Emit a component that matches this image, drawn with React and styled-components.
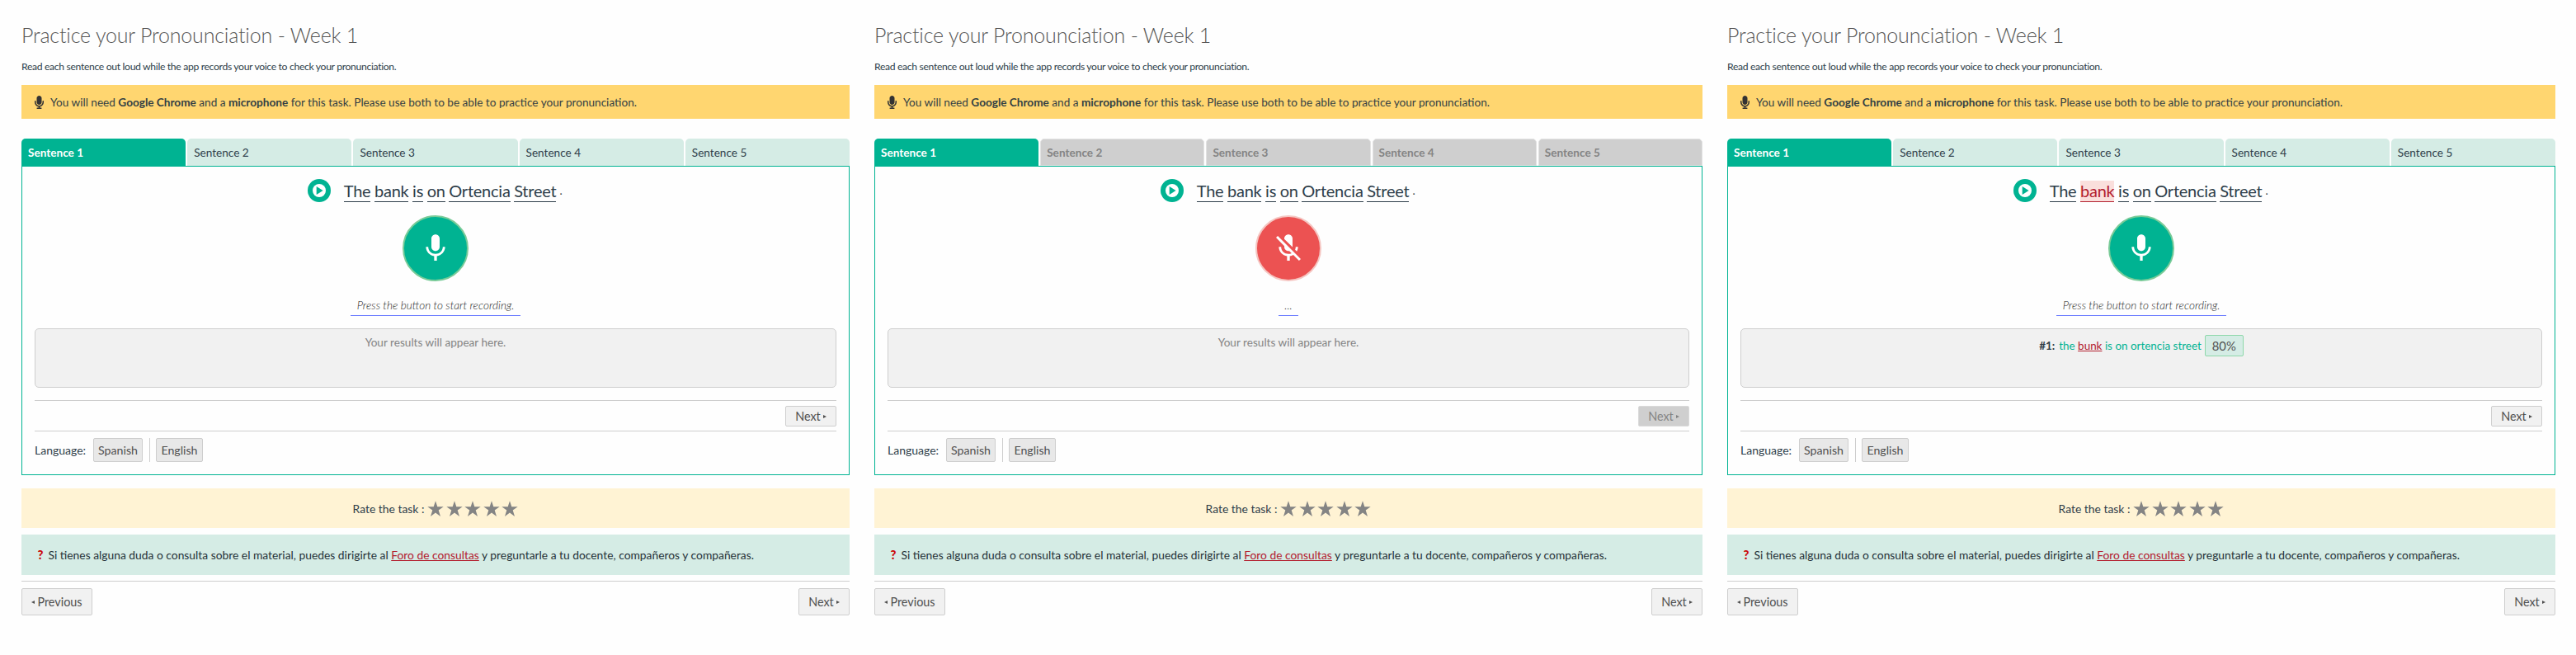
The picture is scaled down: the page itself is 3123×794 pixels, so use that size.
import React from 'react';
import styled, { createGlobalStyle, css } from 'styled-components';
import { MdMic, MdMicOff } from 'react-icons/md';
import { FaMicrophone } from 'react-icons/fa';

const c = {
  green: '#00b392', mint: '#d5ece5', ink: '#2f3e4a', grey: '#848484', line: '#cecece',
  red: '#b3202f', surface: '#f1f1f1', dim: '#cfcfcf', button: '#505050',
};

const GlobalStyle = createGlobalStyle`
  * { box-sizing: border-box; }
  body { margin: 0; background: #fefefe; font-family: Lato, sans-serif; font-size: 13.6px; color: ${c.ink}; }
`;

const Board = styled.div`
  display: flex; gap: 30px; padding: 27px 25px 0 26px; height: 794px;
`;
const Screen = styled.main`
  display: flex; flex-direction: column; width: 1004px; flex: none;
`;
const Title = styled.h1`
  margin: 0; font-size: 25px; line-height: 30px; font-weight: 300; letter-spacing: -0.18px; color: #565656;
`;
const Intro = styled.p`
  margin: 16px 0 14px; font-size: 12.2px; line-height: 16px; letter-spacing: -0.34px;
`;
const Notice = styled.div`
  display: flex; align-items: center; gap: 8px; height: 41px; padding-left: 16px;
  background: #ffd670; color: #333f44;
  svg { width: 11px; height: 16px; color: #333; }
`;
const Tabs = styled.div`
  display: grid; grid-template-columns: repeat(5, 1fr); gap: 2px; margin-top: 24px;
`;
const Tab = styled.button`
  height: 33px; padding: 0 8px; border: 0; border-radius: 5px 5px 0 0; text-align: left;
  font: 400 13.6px Lato, sans-serif; background: ${c.mint}; color: ${c.ink};
  ${p => p.$active && css`background: ${c.green}; color: #fff; font-weight: 700;`}
  &:disabled { background: ${c.dim}; color: ${c.grey}; font-weight: 700; border: 1px solid #e2e2e2; padding: 0 7px; }
`;
const Panel = styled.section`
  display: flex; flex-direction: column; align-items: center; height: 375px;
  border: 1px solid ${c.green}; padding: 15px 15px 0;
`;
const Sentence = styled.div`
  display: flex; align-items: center; height: 28px;
`;
const PlayButton = styled.button`
  display: grid; place-items: center; width: 28px; height: 28px; padding: 0; margin-right: 16px;
  border: 0; border-radius: 50%; background: ${c.green};
  svg { width: 16px; height: 16px; }
`;
const Words = styled.div`
  display: flex; align-items: baseline; gap: 4.6px; padding-top: 2px;
`;
const Word = styled.span`
  height: 26px; font-size: 20px; line-height: 24px; letter-spacing: -0.24px; border-bottom: 1px solid ${c.ink};
  ${p => p.$wrong && css`color: ${c.red}; background: #fadfdc; border-color: ${c.red};`}
`;
const Period = styled.span`
  align-self: flex-start; margin: 0 1.5px 0 -0.5px; line-height: 25px;
`;
const RecordButton = styled.button`
  display: grid; place-items: center; flex: none; width: 80px; height: 80px; padding: 0; margin-top: 16px;
  border-radius: 50%; color: #fff;
  background: ${p => (p.$live ? '#ec5252' : c.green)};
  border: 2px solid ${p => (p.$live ? '#f5c6c2' : '#79cb98')};
  svg { width: 40px; height: 40px; }
`;
const Prompt = styled.div`
  height: 23px; margin: 19px 0 15px; padding: 0 7.5px; line-height: 20px; font-style: italic; font-weight: 300;
  color: #262626; border-bottom: 1px solid #6b7cff;
`;
const Results = styled.div`
  display: flex; justify-content: center; align-items: flex-start; align-self: stretch;
  height: 72px; padding-top: 7px; border: 1px solid ${c.line}; border-radius: 5px; background: ${c.surface};
`;
const Placeholder = styled.span`
  line-height: 18px; color: ${c.grey};
`;
const Attempt = styled.div`
  display: flex; align-items: center; color: ${c.green}; font-size: 13.45px;
  b { color: ${c.ink}; margin-right: 5px; }
  u { color: ${c.red}; }
`;
const Score = styled.span`
  width: 47px; height: 26px; margin-left: 4px; border: 1px solid #8ed8aa; border-radius: 2px;
  background: ${c.mint}; color: ${c.button}; font-size: 14.8px; line-height: 25px; text-align: center;
`;
const StepBar = styled.div`
  display: flex; justify-content: flex-end; align-items: center; align-self: stretch; height: 38px; margin-top: 15px;
  border: solid ${c.line}; border-width: 1px 0;
`;
const NavButton = styled.button`
  display: flex; align-items: center; justify-content: center; gap: 3px; padding: 0; width: ${p => p.$width}px; height: ${p => (p.$compact ? 25 : 33)}px;
  border: 1px solid ${c.line}; border-radius: 2px; background: ${c.surface}; color: ${c.button};
  font: 400 14.4px Lato, sans-serif;
  &:disabled { background: ${c.dim}; border-color: #dadada; color: ${c.grey}; }
`;
const Arrow = styled.i`
  margin-top: 1px; border: solid transparent; border-width: 2.4px 0;
  ${p => (p.$back ? css`border-right: 4.5px solid currentColor;` : css`border-left: 4.5px solid currentColor;`)}
`;
const LanguageBar = styled.div`
  display: flex; align-self: stretch; margin-top: 8px; height: 29px; font-size: 14px; line-height: 29px;
`;
const LanguageButton = styled.button`
  width: ${p => p.$width}px; padding: 0; border: 1px solid ${c.line}; border-radius: 2px; background: #e8e8e8; color: ${c.button};
  font: 400 14.2px Lato, sans-serif;
`;
const LanguageLabel = styled.span`width: 71px;`;
const Divider = styled.span`
  width: 1px; margin: 0 7px 0 8px; background: ${c.line};
`;
const Rating = styled.div`
  display: flex; align-items: center; justify-content: center; height: 48px; margin-top: 16px;
  background: #fff3d4; font-size: 13.9px;
`;
const Stars = styled.span`
  display: flex; gap: 2.5px; margin: 1px 0 0 4px;
  svg { width: 20px; height: 20px; fill: ${c.grey}; }
`;
const Help = styled.div`
  height: 49px; margin-top: 8px; padding-left: 19.5px; background: ${c.mint}; color: #263238; font-size: 13.84px; line-height: 49px;
  a { color: ${c.red}; text-decoration: underline; }
`;
const HelpMark = styled.b`
  display: inline-block; width: 13px; color: #cc0a0a; font-weight: 900; font-size: 15px;
`;
const Footer = styled.footer`
  display: flex; justify-content: space-between; margin-top: 7px; padding-top: 8px; border-top: 1px solid ${c.line};
`;

const words = ['The', 'bank', 'is', 'on', 'Ortencia', 'Street'];

const PlayIcon = () => (
  <svg viewBox="0 0 16 16">
    <circle cx="8" cy="8" r="8" fill="#fff" />
    <path d="M4.7 3v10L12.6 8z" fill={c.green} />
  </svg>
);

const Star = () => (
  <svg viewBox="0 0 20 20"><path d="M10 0.3 12.3 7.2 19.7 7.2 13.7 11.6 16 19 10 14.5 4 19 6.3 11.6 .3 7.2 7.7 7.2z" /></svg>
);

function Practice({ recording, attempt }) {
  return (
    <Screen>
      <Title>Practice your Pronounciation - Week 1</Title>
      <Intro>Read each sentence out loud while the app records your voice to check your pronunciation.</Intro>
      <Notice>
        <FaMicrophone />
        <span>You will need <b>Google Chrome</b> and a <b>microphone</b> for this task. Please use both to be able to practice your pronunciation.</span>
      </Notice>
      <Tabs>
        {[1, 2, 3, 4, 5].map(n => (
          <Tab key={n} $active={n === 1} disabled={recording && n !== 1}>Sentence {n}</Tab>
        ))}
      </Tabs>
      <Panel>
        <Sentence>
          <PlayButton><PlayIcon /></PlayButton>
          <Words>
            {words.map(w => <Word key={w} $wrong={attempt && w === 'bank'}>{w}</Word>)}
            <Period>.</Period>
          </Words>
        </Sentence>
        <RecordButton $live={recording}>{recording ? <MdMicOff /> : <MdMic />}</RecordButton>
        <Prompt>{recording ? '...' : 'Press the button to start recording.'}</Prompt>
        <Results>
          {attempt ? (
            <Attempt>
              <b>#1:</b><span>the <u>bunk</u> is on ortencia street</span><Score>80%</Score>
            </Attempt>
          ) : <Placeholder>Your results will appear here.</Placeholder>}
        </Results>
        <StepBar>
          <NavButton $width={62} $compact disabled={recording}>Next<Arrow /></NavButton>
        </StepBar>
        <LanguageBar>
          <LanguageLabel>Language:</LanguageLabel>
          <LanguageButton $width={60}>Spanish</LanguageButton>
          <Divider />
          <LanguageButton $width={57}>English</LanguageButton>
        </LanguageBar>
      </Panel>
      <Rating>Rate the task :<Stars><Star /><Star /><Star /><Star /><Star /></Stars></Rating>
      <Help>
        <HelpMark>?</HelpMark>
        Si tienes alguna duda o consulta sobre el material, puedes dirigirte al <a>Foro de consultas</a> y preguntarle a tu docente, compañeros y compañeras.
      </Help>
      <Footer>
        <NavButton $width={86}><Arrow $back />Previous</NavButton>
        <NavButton $width={62}>Next<Arrow /></NavButton>
      </Footer>
    </Screen>
  );
}

export default function App() {
  return (
    <Board>
      <GlobalStyle />
      <Practice />
      <Practice recording />
      <Practice attempt />
    </Board>
  );
}
